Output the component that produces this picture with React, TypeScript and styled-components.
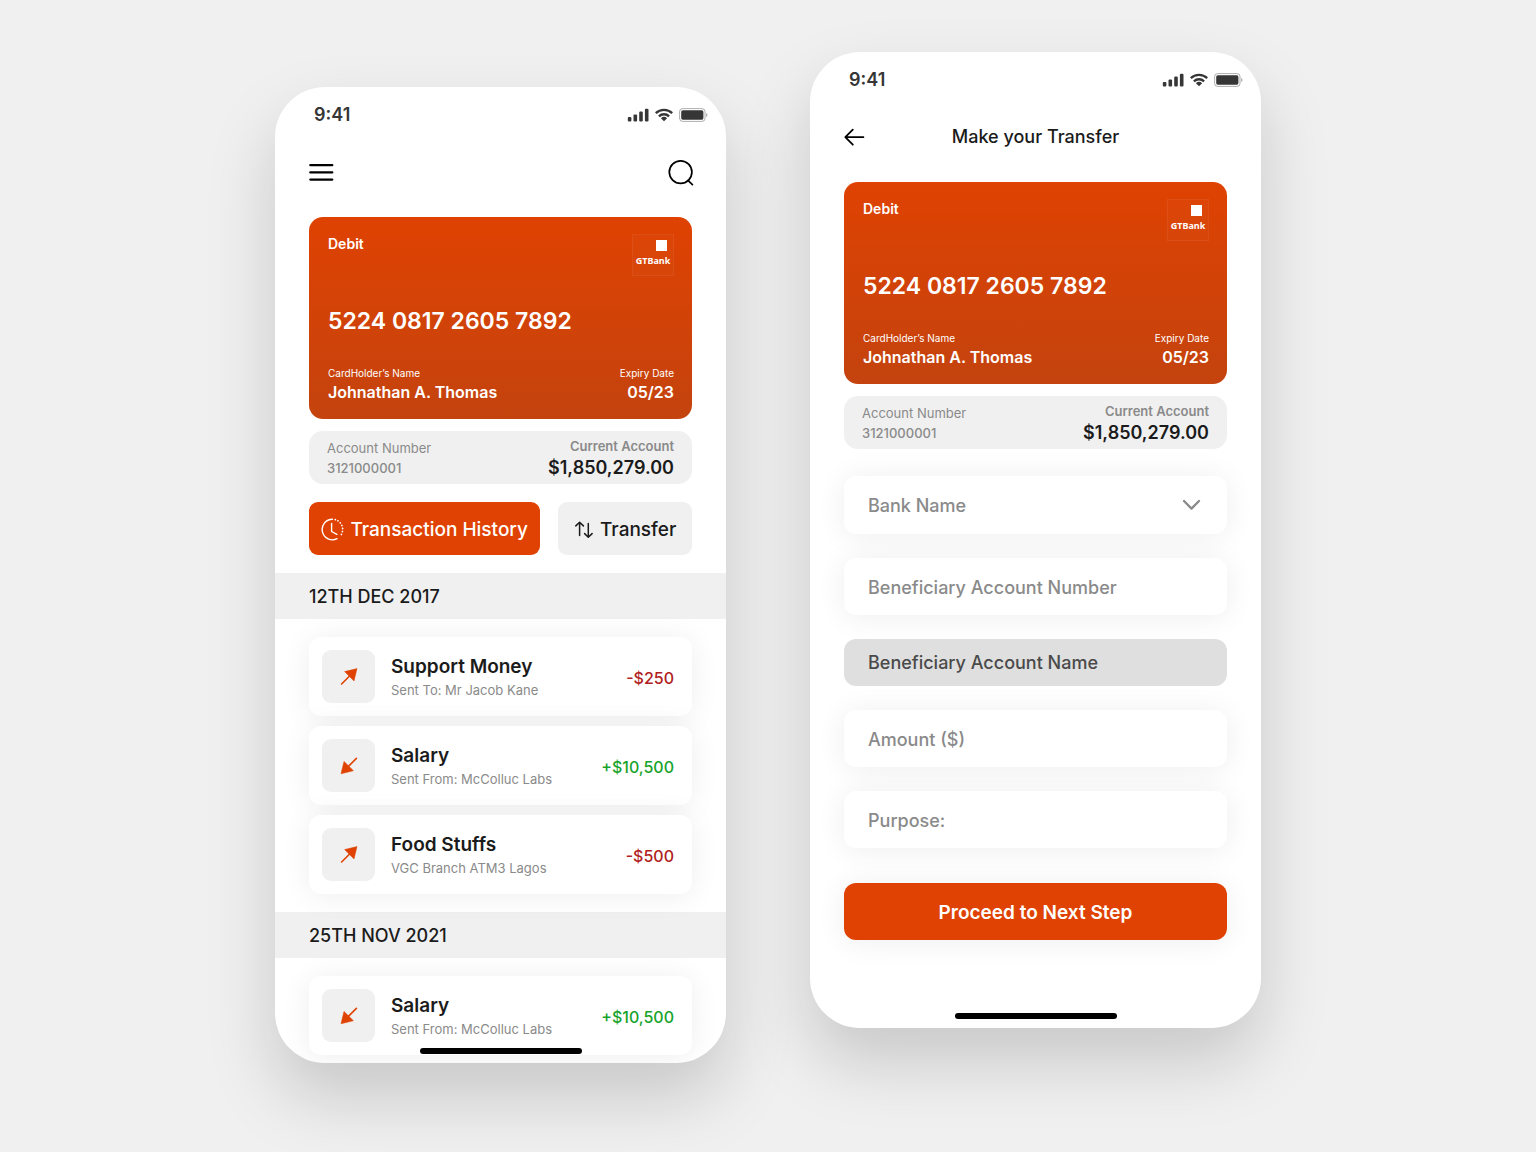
import React from "react";
import styled, { createGlobalStyle, css } from "styled-components";

const color = {
  page: "#f0f0f0",
  surface: "#ffffff",
  fill: "#f0f0f0",
  brand: "#df4202",
  ink: "#1b1b1b",
  muted: "#8a8a8a",
  debit: "#b02020",
  credit: "#17a32b",
};

const GlobalStyle = createGlobalStyle`
  *, *::before, *::after { box-sizing: border-box; }
  body {
    margin: 0;
    background: ${color.page};
    color: ${color.ink};
    font-family: Inter, "Noto Sans", sans-serif;
    -webkit-font-smoothing: antialiased;
  }
  h1, h2, h3, p, ul { margin: 0; padding: 0; font: inherit; }
  ul { list-style: none; }
  button, input, select { font: inherit; color: inherit; border: 0; margin: 0; }
  button { cursor: pointer; }
  svg { display: block; flex: none; }
`;

const Stage = styled.main`
  display: flex;
  justify-content: center;
  align-items: flex-start;
  gap: 84px;
  min-height: 100vh;
  padding: 52px 24px 88px;
`;

const Phone = styled.section<{ $lowered?: boolean }>`
  position: relative;
  flex: 0 1 451px;
  min-width: 0;
  margin-top: ${(p) => (p.$lowered ? "35px" : "0")};
  border-radius: 50px;
  background: ${color.surface};
  box-shadow: 0 34px 68px rgba(0, 0, 0, 0.17);
`;

const Screen = styled.div<{ $bottom: number }>`
  padding-bottom: ${(p) => p.$bottom}px;
  border-radius: 50px;
  overflow: hidden;
`;

const StatusBar = styled.div`
  display: flex;
  justify-content: space-between;
  align-items: center;
  height: 54px;
  padding: 2px 18px 0 39px;
  color: #363636;
  font-size: 18px;
  font-weight: 600;
  line-height: 24px;
`;

const StatusIcons = styled.div`
  display: flex;
  align-items: center;
  gap: 6px;
`;

const Header = styled.header`
  display: grid;
  grid-template-columns: 28px 1fr 28px;
  align-items: center;
  height: 62px;
  margin-bottom: 14px;
  padding: 0 32px;
`;

const IconButton = styled.button`
  display: grid;
  place-items: center;
  width: 28px;
  height: 28px;
  padding: 0;
  background: none;
  color: #000;
`;

const Title = styled.h1`
  grid-column: 2;
  font-size: 18px;
  font-weight: 500;
  line-height: 24px;
  text-align: center;
`;

const Content = styled.div`
  display: flex;
  flex-direction: column;
  padding: 0 34px;
`;

const BankCard = styled.article`
  display: flex;
  flex-direction: column;
  justify-content: space-between;
  height: 202px;
  padding: 17px 18px 16px 19px;
  border-radius: 14px;
  background: linear-gradient(180deg, #df4202 0%, #c4430e 100%);
  color: #fff;
`;

const CardRow = styled.div<{ $align?: string }>`
  display: flex;
  justify-content: space-between;
  align-items: ${(p) => p.$align ?? "flex-end"};
`;

const CardKind = styled.p`
  font-size: 14px;
  font-weight: 600;
  line-height: 20px;
`;

const Logo = styled.div`
  display: flex;
  flex-direction: column;
  align-items: center;
  width: 42px;
  height: 42px;
  padding-top: 5px;
  border: 1px solid rgba(255, 255, 255, 0.06);
  background: rgba(255, 255, 255, 0.02);
  font-family: "Noto Sans", "Open Sans", sans-serif;
  font-size: 9px;
  font-weight: 700;
  line-height: 12px;

  &::before {
    content: "";
    width: 11px;
    height: 11px;
    margin: 0 0 4px 16px;
    background: #fff;
  }
`;

const CardNumber = styled.p`
  font-size: 23px;
  font-weight: 600;
  line-height: 32px;
`;

const CardField = styled.div<{ $end?: boolean }>`
  text-align: ${(p) => (p.$end ? "right" : "left")};
`;

const CardLabel = styled.p`
  font-size: 10px;
  line-height: 16px;
`;

const CardValue = styled.p`
  font-size: 16px;
  font-weight: 600;
  line-height: 22px;
`;

const AccountBar = styled.div`
  display: flex;
  justify-content: space-between;
  align-items: center;
  height: 53px;
  margin-top: 12px;
  padding: 0 18px;
  border-radius: 14px;
  background: ${color.fill};
  color: ${color.muted};
  font-size: 13px;
  line-height: 20px;
`;

const AccountNumber = styled.div`
  p + p { font-weight: 500; }
`;

const Balance = styled.div`
  font-weight: 600;
  text-align: right;
`;

const BalanceAmount = styled.p`
  color: ${color.ink};
  font-size: 18px;
  line-height: 24px;
`;

const Actions = styled.div`
  display: flex;
  gap: 18px;
  margin: 18px 0;
`;

const ActionButton = styled.button<{ $primary?: boolean }>`
  display: flex;
  flex: ${(p) => (p.$primary ? "232 1 0" : "134 1 0")};
  justify-content: center;
  align-items: center;
  gap: 6px;
  height: 53px;
  padding: 2px 0 0;
  border-radius: 9px;
  background: ${(p) => (p.$primary ? color.brand : color.fill)};
  color: ${(p) => (p.$primary ? "#fff" : color.ink)};
  font-size: 19px;
  font-weight: 500;
  line-height: 24px;
  white-space: nowrap;
`;

const DateBand = styled.h2`
  padding: 12px 34px 10px;
  background: ${color.fill};
  font-size: 18px;
  font-weight: 500;
  line-height: 24px;
`;

const List = styled.ul<{ $last?: boolean }>`
  display: flex;
  flex-direction: column;
  gap: 10px;
  padding: ${(p) => (p.$last ? "18px 34px 0" : "18px 34px")};
`;

const raised = css`
  background: ${color.surface};
  box-shadow: 0 2px 30px rgba(0, 0, 0, 0.07);
`;

const Item = styled.li`
  display: flex;
  align-items: center;
  gap: 16px;
  height: 79px;
  padding: 0 18px 0 13px;
  border-radius: 12px;
  ${raised}
`;

const Badge = styled.div`
  display: grid;
  place-items: center;
  flex: none;
  width: 53px;
  height: 53px;
  border-radius: 9px;
  background: ${color.fill};
`;

const ItemText = styled.div`
  flex: 1;
  min-width: 0;
  padding-top: 2px;
`;

const ItemTitle = styled.h3`
  font-size: 19px;
  font-weight: 600;
  line-height: 24px;
`;

const ItemNote = styled.p`
  color: ${color.muted};
  font-size: 13px;
  font-weight: 400;
  line-height: 22px;
`;

const ItemAmount = styled.p<{ $credit: boolean }>`
  padding-top: 2px;
  color: ${(p) => (p.$credit ? color.credit : color.debit)};
  font-size: 16px;
  font-weight: 500;
  line-height: 24px;
`;

const HomeIndicator = styled.div`
  position: absolute;
  bottom: 9px;
  left: 50%;
  width: 162px;
  height: 6px;
  border-radius: 3px;
  background: #000;
  transform: translateX(-50%);
`;

const Form = styled.form`
  display: flex;
  flex-direction: column;
  gap: 24px;
  margin-top: 27px;
`;

const fieldText = css`
  width: 100%;
  padding: 2px 24px 0;
  border-radius: 12px;
  font-size: 18px;
  font-weight: 500;
  line-height: 24px;
  outline: 0;
`;

const SelectWrap = styled.div`
  position: relative;

  svg {
    position: absolute;
    top: 23px;
    right: 26px;
    color: ${color.muted};
    pointer-events: none;
  }
`;

const Select = styled.select`
  display: block;
  height: 58px;
  appearance: none;
  ${fieldText}
  ${raised}
  color: ${color.muted};
`;

const Input = styled.input`
  height: 57px;
  ${fieldText}
  ${raised}
  &::placeholder { color: ${color.muted}; opacity: 1; }

  &:read-only {
    height: 47px;
    padding-top: 0;
    background: #dfdfdf;
    box-shadow: none;
  }
  &:read-only::placeholder { color: #4a4a4a; }
`;

const SubmitButton = styled.button`
  height: 57px;
  margin-top: 11px;
  padding: 2px 0 0;
  border-radius: 12px;
  background: ${color.brand};
  box-shadow: 0 2px 30px rgba(0, 0, 0, 0.07);
  color: #fff;
  font-size: 19px;
  font-weight: 600;
  line-height: 24px;
`;

const SignalIcon = () => (
  <svg width="22" height="14" viewBox="0 0 22 14" fill="currentColor" aria-hidden="true">
    <rect x="0.8" y="9" width="3.6" height="4.5" rx="1.1" />
    <rect x="6.5" y="6.4" width="3.6" height="7.1" rx="1.1" />
    <rect x="12.2" y="3.6" width="3.6" height="9.9" rx="1.1" />
    <rect x="17.9" y="0.7" width="3.6" height="12.8" rx="1.1" />
  </svg>
);

const WifiIcon = () => (
  <svg width="18" height="14" viewBox="0 0 18 14" aria-hidden="true">
    <g fill="none" stroke="currentColor" strokeWidth="2.3">
      <path d="M0.8 5.1a11.8 11.8 0 0 1 16.4 0" />
      <path d="M3.9 8.3a7.4 7.4 0 0 1 10.2 0" />
    </g>
    <path d="M9 13.3 5.9 10.2a4.5 4.5 0 0 1 6.2 0Z" fill="currentColor" />
  </svg>
);

const BatteryIcon = () => (
  <svg width="29" height="14" viewBox="0 0 29 14" aria-hidden="true">
    <rect x="0.6" y="0.6" width="25.4" height="12.8" rx="3" fill="none" stroke="currentColor" strokeOpacity="0.4" />
    <rect x="2.2" y="2.3" width="22.2" height="9.4" rx="1.6" fill="currentColor" />
    <path d="M27.2 4.9c1.7.7 1.7 3.5 0 4.2Z" fill="currentColor" fillOpacity="0.45" />
  </svg>
);

const MenuIcon = () => (
  <svg width="26" height="20" viewBox="0 0 26 20" fill="none" stroke="currentColor" strokeWidth="2.2" strokeLinecap="round" aria-hidden="true">
    <path d="M2.3 3.2h22M2.3 10.4h22M2.3 17.6h22" />
  </svg>
);

const SearchIcon = () => (
  <svg width="28" height="28" viewBox="0 0 28 28" fill="none" stroke="currentColor" strokeWidth="1.7" strokeLinecap="round" aria-hidden="true">
    <circle cx="14.6" cy="14.1" r="11.3" />
    <path d="M22 22.3l4.4 4.3" />
  </svg>
);

const BackIcon = () => (
  <svg width="24" height="20" viewBox="0 0 24 20" fill="none" stroke="currentColor" strokeWidth="1.8" strokeLinecap="round" strokeLinejoin="round" aria-hidden="true">
    <path d="M19.4 10.2H1.6M8.8 2.7 1.3 10.2l7.5 7.5" />
  </svg>
);

const HistoryIcon = () => (
  <svg width="23" height="23" viewBox="0 0 23 23" fill="none" stroke="currentColor" strokeWidth="1.4" strokeLinecap="round" strokeLinejoin="round" aria-hidden="true">
    <path d="M11.5 1.2a10.3 10.3 0 1 0 4.6 19.5" />
    <path d="M14.3 1.6a10.3 10.3 0 0 1 4.4 17.1" strokeDasharray="0.1 2.9" strokeWidth="1.7" />
    <path d="M10.6 5.5v8l5.3 2.8" />
  </svg>
);

const SwapIcon = () => (
  <svg width="20" height="18" viewBox="0 0 20 18" fill="none" stroke="currentColor" strokeWidth="1.5" strokeLinecap="round" strokeLinejoin="round" aria-hidden="true">
    <path d="M5.6 14.6V1.2M1.8 4.9l3.8-3.7 3.8 3.7" />
    <path d="M14.3 2.5v13.6M10.6 12.6l3.7 3.7 3.8-3.7" />
  </svg>
);

const ChevronIcon = () => (
  <svg width="19" height="12" viewBox="0 0 19 12" fill="none" stroke="currentColor" strokeWidth="2.3" strokeLinecap="round" strokeLinejoin="round" aria-hidden="true">
    <path d="M2 2l7.5 7.6L17 2" />
  </svg>
);

const OutIcon = () => (
  <svg width="18" height="18" viewBox="0 0 18 18" aria-hidden="true">
    <path d="M1.6 16l9-9" stroke={color.brand} strokeWidth="1.6" strokeLinecap="round" />
    <path d="M4.6 3.6 17 .6l-3 12.4Z" fill={color.brand} stroke={color.brand} strokeWidth="0.5" strokeLinejoin="round" />
  </svg>
);

const InIcon = () => (
  <svg width="18" height="18" viewBox="0 0 18 18" aria-hidden="true">
    <path d="M16.4 1.4l-9 9" stroke={color.brand} strokeWidth="1.6" strokeLinecap="round" />
    <path d="M13.4 13.7 1 16.8 4 4.4Z" fill={color.brand} stroke={color.brand} strokeWidth="0.5" strokeLinejoin="round" />
  </svg>
);

type Entry = { title: string; note: string; amount: string; credit: boolean };

const groups: { date: string; entries: Entry[] }[] = [
  {
    date: "12TH DEC 2017",
    entries: [
      { title: "Support Money", note: "Sent To: Mr Jacob Kane", amount: "-$250", credit: false },
      { title: "Salary", note: "Sent From: McColluc Labs", amount: "+$10,500", credit: true },
      { title: "Food Stuffs", note: "VGC Branch ATM3 Lagos", amount: "-$500", credit: false },
    ],
  },
  {
    date: "25TH NOV 2021",
    entries: [{ title: "Salary", note: "Sent From: McColluc Labs", amount: "+$10,500", credit: true }],
  },
];

const Status = () => (
  <StatusBar>
    <span>9:41</span>
    <StatusIcons>
      <SignalIcon />
      <WifiIcon />
      <BatteryIcon />
    </StatusIcons>
  </StatusBar>
);

const AccountSummary = () => (
  <>
    <BankCard>
      <CardRow $align="flex-start">
        <CardKind>Debit</CardKind>
        <Logo>GTBank</Logo>
      </CardRow>
      <CardNumber>5224 0817 2605 7892</CardNumber>
      <CardRow>
        <CardField>
          <CardLabel>CardHolder’s Name</CardLabel>
          <CardValue>Johnathan A. Thomas</CardValue>
        </CardField>
        <CardField $end>
          <CardLabel>Expiry Date</CardLabel>
          <CardValue>05/23</CardValue>
        </CardField>
      </CardRow>
    </BankCard>
    <AccountBar>
      <AccountNumber>
        <p>Account Number</p>
        <p>3121000001</p>
      </AccountNumber>
      <Balance>
        <p>Current Account</p>
        <BalanceAmount>$1,850,279.00</BalanceAmount>
      </Balance>
    </AccountBar>
  </>
);

const HistoryPhone = () => (
  <Phone $lowered>
    <Screen $bottom={8}>
      <Status />
      <Header>
        <IconButton type="button" aria-label="Menu">
          <MenuIcon />
        </IconButton>
        <span />
        <IconButton type="button" aria-label="Search">
          <SearchIcon />
        </IconButton>
      </Header>
      <Content>
        <AccountSummary />
        <Actions>
          <ActionButton type="button" $primary>
            <HistoryIcon />
            Transaction History
          </ActionButton>
          <ActionButton type="button">
            <SwapIcon />
            Transfer
          </ActionButton>
        </Actions>
      </Content>
      {groups.map((group, index) => (
        <React.Fragment key={group.date}>
          <DateBand>{group.date}</DateBand>
          <List $last={index === groups.length - 1}>
            {group.entries.map((entry) => (
              <Item key={entry.title}>
                <Badge>{entry.credit ? <InIcon /> : <OutIcon />}</Badge>
                <ItemText>
                  <ItemTitle>{entry.title}</ItemTitle>
                  <ItemNote>{entry.note}</ItemNote>
                </ItemText>
                <ItemAmount $credit={entry.credit}>{entry.amount}</ItemAmount>
              </Item>
            ))}
          </List>
        </React.Fragment>
      ))}
    </Screen>
    <HomeIndicator />
  </Phone>
);

const TransferPhone = () => (
  <Phone>
    <Screen $bottom={88}>
      <Status />
      <Header>
        <IconButton type="button" aria-label="Back">
          <BackIcon />
        </IconButton>
        <Title>Make your Transfer</Title>
      </Header>
      <Content>
        <AccountSummary />
        <Form onSubmit={(event) => event.preventDefault()}>
          <SelectWrap>
            <Select aria-label="Bank Name" defaultValue="">
              <option value="">Bank Name</option>
            </Select>
            <ChevronIcon />
          </SelectWrap>
          <Input aria-label="Beneficiary Account Number" placeholder="Beneficiary Account Number" />
          <Input aria-label="Beneficiary Account Name" placeholder="Beneficiary Account Name" readOnly />
          <Input aria-label="Amount ($)" placeholder="Amount ($)" />
          <Input aria-label="Purpose:" placeholder="Purpose:" />
          <SubmitButton type="submit">Proceed to Next Step</SubmitButton>
        </Form>
      </Content>
    </Screen>
    <HomeIndicator />
  </Phone>
);

export default function App() {
  return (
    <>
      <GlobalStyle />
      <Stage>
        <HistoryPhone />
        <TransferPhone />
      </Stage>
    </>
  );
}
